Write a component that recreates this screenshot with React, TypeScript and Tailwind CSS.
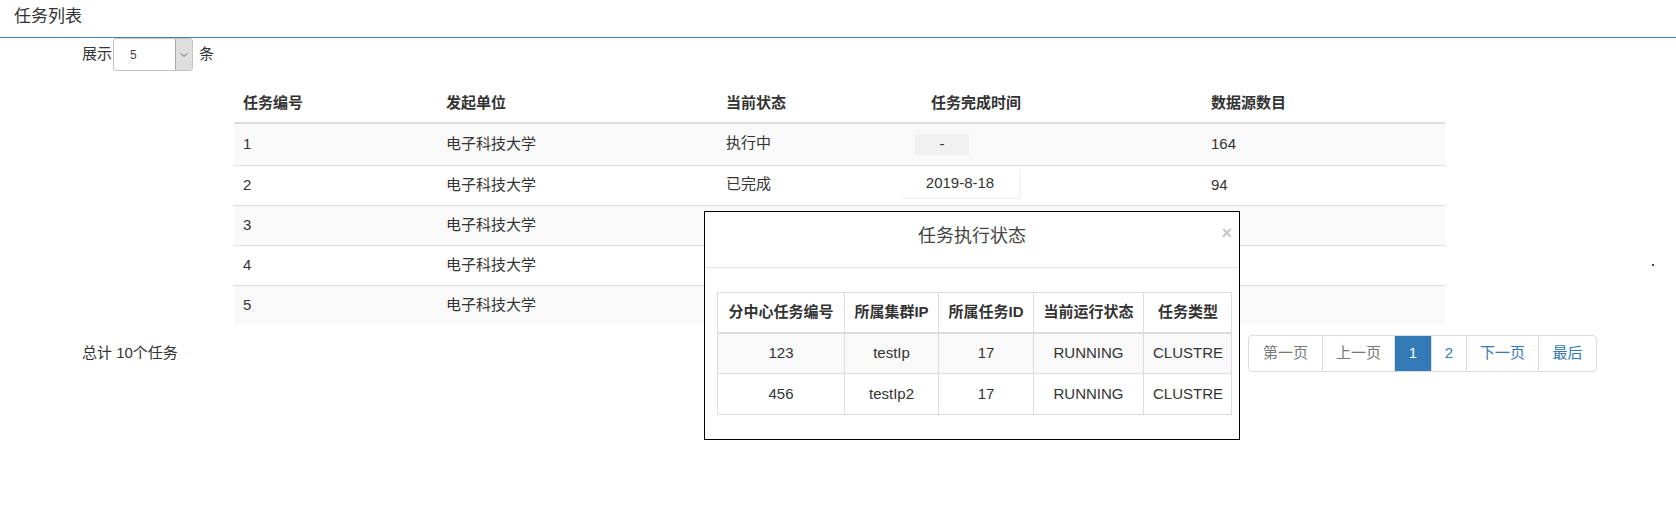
import { ChevronDown } from "lucide-react";

/* ───────── Data ───────── */
interface TaskRow {
    id: string;
    unit: string;
    status: string;
    time: string;
    count: string;
}

const tasks: TaskRow[] = [
    { id: "1", unit: "电子科技大学", status: "执行中", time: "-", count: "164" },
    { id: "2", unit: "电子科技大学", status: "已完成", time: "2019-8-18", count: "94" },
    { id: "3", unit: "电子科技大学", status: "", time: "", count: "" },
    { id: "4", unit: "电子科技大学", status: "", time: "", count: "" },
    { id: "5", unit: "电子科技大学", status: "", time: "", count: "" },
];

const subTasks = [
    { no: "123", ip: "testIp", taskId: "17", state: "RUNNING", type: "CLUSTRE" },
    { no: "456", ip: "testIp2", taskId: "17", state: "RUNNING", type: "CLUSTRE" },
];

const cols = "grid grid-cols-[203px_280px_183px_302px_243px]";

/* ───────── Time cell (odd little boxes in the source page) ───────── */
const TimeCell = ({ value }: { value: string }) => {
    if (value === "-") {
        return (
            <span className="ml-[15px] w-[54px] h-[21px] bg-[#f0f0f0] flex items-center justify-center">
                -
            </span>
        );
    }
    if (value) {
        return (
            <span className="ml-[1px] w-[119px] h-[29px] -mt-[3px] bg-white border-r border-b border-[#eee] flex items-start justify-center pt-[4px] leading-[18px]">
                {value}
            </span>
        );
    }
    return null;
};

/* ───────── Modal ───────── */
const StatusModal = () => (
    <div className="absolute left-[704px] top-[211px] w-[536px] h-[229px] border border-black bg-white">
        <div className="relative h-[56px] border-b border-[#e5e5e5] flex items-center justify-center pb-[7px]">
            <span className="text-[18px] text-[#444] leading-none">任务执行状态</span>
            <span className="absolute right-[7px] top-[12px] text-[18px] font-bold text-[#c8c8c8] leading-none">
                ×
            </span>
        </div>
        <div className="pl-[12px] pt-[24px]">
            <div className="w-[515px] border border-[#ddd] text-[15px]">
                <div className="grid grid-cols-[127px_94px_95px_110px_88px] h-[41px] border-b-2 border-[#ddd] font-bold">
                    {["分中心任务编号", "所属集群IP", "所属任务ID", "当前运行状态", "任务类型"].map((h, i) => (
                        <div
                            key={h}
                            className={`flex items-center justify-center ${i < 4 ? "border-r border-[#ddd]" : ""}`}
                        >
                            {h}
                        </div>
                    ))}
                </div>
                {subTasks.map((s, r) => (
                    <div
                        key={s.no}
                        className={`grid grid-cols-[127px_94px_95px_110px_88px] h-[40px] ${
                            r === 0 ? "bg-[#f9f9f9] border-b border-[#ddd]" : "bg-white"
                        }`}
                    >
                        {[s.no, s.ip, s.taskId, s.state, s.type].map((v, i) => (
                            <div
                                key={i}
                                className={`flex items-center justify-center ${i < 4 ? "border-r border-[#ddd]" : ""}`}
                            >
                                {v}
                            </div>
                        ))}
                    </div>
                ))}
            </div>
        </div>
    </div>
);

/* ───────── Pagination ───────── */
const pages = [
    { label: "第一页", w: "w-[73px]", tone: "text-[#777]" },
    { label: "上一页", w: "w-[72px]", tone: "text-[#777]" },
    { label: "1", w: "w-[37px]", tone: "text-white bg-[#337ab7]" },
    { label: "2", w: "w-[35px]", tone: "text-[#337ab7]" },
    { label: "下一页", w: "w-[72px]", tone: "text-[#337ab7]" },
    { label: "最后", w: "w-[58px]", tone: "text-[#337ab7]" },
];

const Pagination = () => (
    <div className="flex h-[37px] border border-[#ddd] rounded-[4px] overflow-hidden text-[15px]">
        {pages.map((p, i) => (
            <div
                key={p.label}
                className={`${p.w} ${p.tone} flex items-center justify-center ${i > 0 ? "border-l border-[#ddd]" : ""}`}
            >
                {p.label}
            </div>
        ))}
    </div>
);

/* ───────── Main ───────── */
export default function App() {
    return (
        <div className="relative w-[1676px] h-[519px] overflow-hidden bg-white text-[#333] font-['Liberation_Sans','Noto_Sans_CJK_SC',sans-serif]">
            {/* Title bar */}
            <div className="h-[38px] border-b border-[#4f7fae] pl-[14px] flex items-center pb-[4px]">
                <span className="text-[17px] leading-none">任务列表</span>
            </div>

            {/* Page size */}
            <div className="flex items-center pl-[82px] h-[33px] text-[15px]">
                <span>展示</span>
                <div className="ml-[1px] w-[80px] h-[33px] border border-[#c4c4c4] rounded-[3px] flex overflow-hidden">
                    <span className="flex-1 flex items-center pl-[16px] text-[12px] text-[#444]">5</span>
                    <span className="w-[17px] bg-[#dedede] border-l border-[#a8a8a8] flex items-center justify-center text-[#444]">
                        <ChevronDown size={12} strokeWidth={1.6} />
                    </span>
                </div>
                <span className="ml-[6px]">条</span>
            </div>

            {/* Task table */}
            <div className="ml-[234px] mt-[13px] w-[1211px] text-[15px]">
                <div className={`${cols} h-[40px] border-b-2 border-[#ddd] font-bold items-center`}>
                    <div className="pl-[9px]">任务编号</div>
                    <div className="pl-[9px]">发起单位</div>
                    <div className="pl-[9px]">当前状态</div>
                    <div className="pl-[31px]">任务完成时间</div>
                    <div className="pl-[9px]">数据源数目</div>
                </div>
                {tasks.map((t, i) => (
                    <div
                        key={t.id}
                        className={`${cols} items-center ${i === 0 ? "h-[41px]" : "h-[40px] border-t border-[#ddd]"} ${
                            i % 2 === 0 ? "bg-[#f9f9f9]" : "bg-white"
                        }`}
                    >
                        <div className="pl-[9px]">{t.id}</div>
                        <div className="pl-[9px]">{t.unit}</div>
                        <div className="pl-[9px] -mt-[3px]">{t.status}</div>
                        <div className="flex">
                            <TimeCell value={t.time} />
                        </div>
                        <div className="pl-[9px]">{t.count}</div>
                    </div>
                ))}
            </div>

            {/* Footer: total + pager */}
            <div className="mt-[10px] w-[1597px] pl-[82px] flex items-center justify-between">
                <span className="text-[15px]">总计 10个任务</span>
                <Pagination />
            </div>

            <StatusModal />

            {/* stray dot in the source */}
            <span className="absolute left-[1652px] top-[264px] w-[2px] h-[2px] bg-[#444]" />
        </div>
    );
}
